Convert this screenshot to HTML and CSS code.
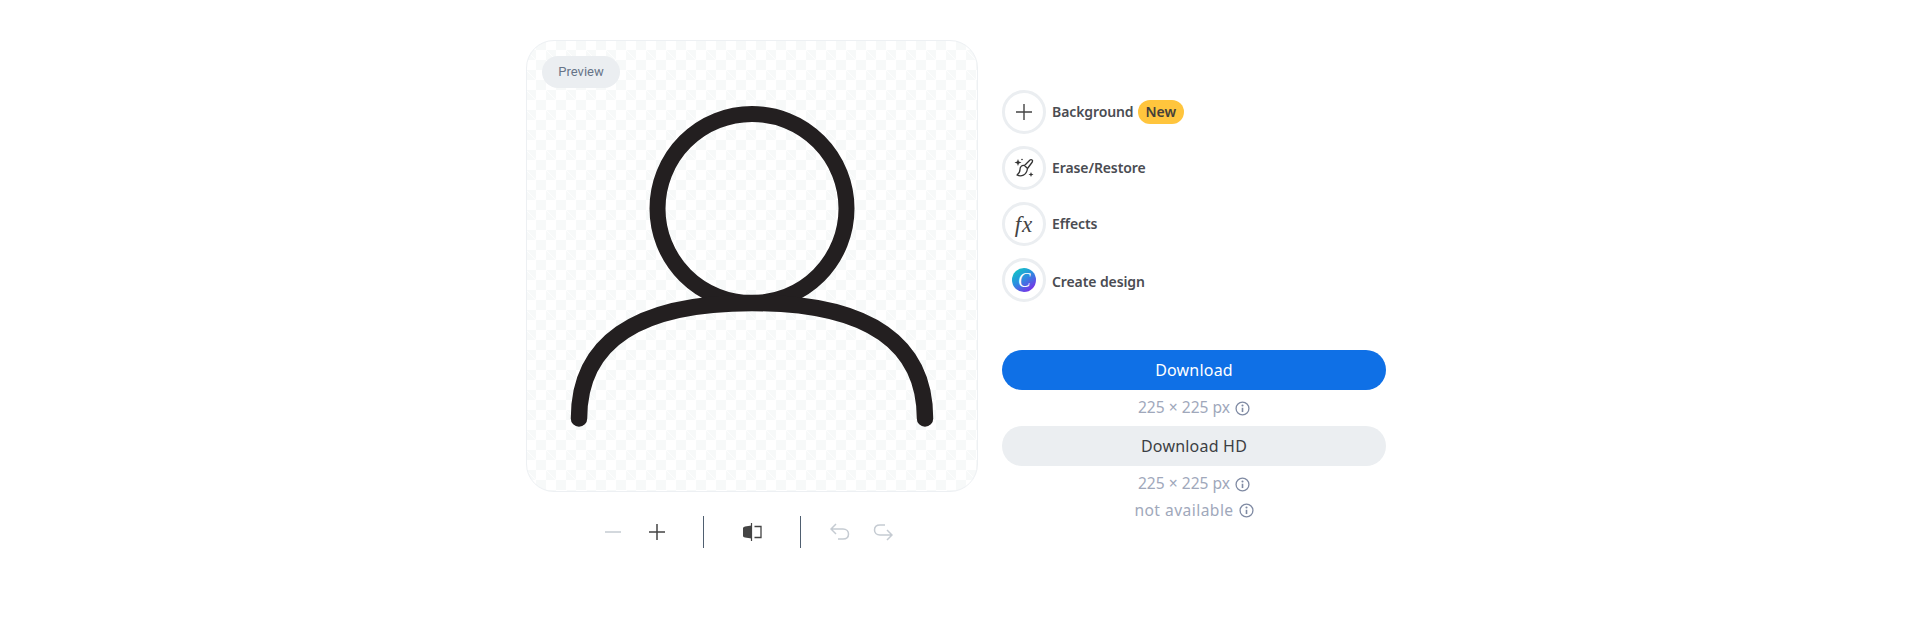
FILE: index.html
```html
<!DOCTYPE html>
<html lang="en">
<head>
<meta charset="utf-8">
<title>Preview</title>
<link rel="stylesheet" href="styles.css">
</head>
<body>
<main class="page">
  <section class="left">
    <div class="preview">
      <span class="badge">Preview</span>
      <svg class="person" viewBox="0 0 452 452" aria-hidden="true">
        <circle cx="226" cy="168.5" r="94.5" fill="none" stroke="#231f20" stroke-width="16"/>
        <path d="M53 378.500C53 306 106 263 226 263C346 263 399 306 399 378.500" fill="none" stroke="#231f20" stroke-width="16.500" stroke-linecap="round"/>
      </svg>
    </div>
    <div class="toolbar">
      <svg class="tool t-minus" viewBox="0 0 16 16"><path d="M0 8H16" class="off"/></svg>
      <svg class="tool t-plus" viewBox="0 0 16 16"><path d="M0 8H16M8 0V16" class="on"/></svg>
      <span class="divider d-one"></span>
      <svg class="tool t-compare" viewBox="0 0 20 20"><path d="M9.500 3.500L3 4.500Q1 5 1 6V14Q1 15 3 15.500L9.500 16.500Z" fill="#444"/><path d="M9.500 1V19" stroke="#444" stroke-width="1.2"/><path d="M12.500 4.500H19V15.500H12.500" fill="none" stroke="#444" stroke-width="1.3"/></svg>
      <span class="divider d-two"></span>
      <svg class="tool t-undo" viewBox="0 0 20 18"><path d="M6 1L1 6L6 11M1 6H13C16.5 6 18.5 8.500 18.500 11C18.500 14 16.500 16 13 16H8" class="off" fill="none"/></svg>
      <svg class="tool t-redo" viewBox="0 0 20 18"><path d="M14 7L19 12L14 17M19 12H7C3.500 12 1.500 9.500 1.500 7C1.500 4 3.500 2 7 2H12" class="off" fill="none"/></svg>
    </div>
  </section>
  <section class="right">
    <ul class="actions">
      <li class="action">
        <span class="circle"><svg class="ico" viewBox="0 0 18 18"><path d="M9 1V17M1 9H17" stroke="#444" stroke-width="1.4" fill="none"/></svg></span>
        <span class="label">Background</span><span class="new">New</span>
      </li>
      <li class="action">
        <span class="circle"><svg class="brush" viewBox="0 0 22 22"><path d="M17 3C18.500 2 20.300 3.500 19.300 5L14.500 11.500L11.500 8.500ZM11.500 8.500C8.500 8 7 10 7 12.500C7 15 6 16.500 4 18C8 20 13.500 18.500 14.500 11.500" fill="none" stroke="#333" stroke-width="1.3" stroke-linejoin="round"/><path d="M5 2L5.900 4.600L8.500 5.500L5.900 6.400L5 9L4.100 6.400L1.500 5.500L4.100 4.600Z" fill="#333"/><path d="M18 15L18.700 16.800L20.500 17.500L18.700 18.200L18 20L17.300 18.200L15.500 17.500L17.300 16.800Z" fill="#333"/><circle cx="9" cy="2.500" r=".8" fill="#333"/></svg></span>
        <span class="label">Erase/Restore</span>
      </li>
      <li class="action">
        <span class="circle"><span class="fx">fx</span></span>
        <span class="label">Effects</span>
      </li>
      <li class="action">
        <span class="circle"><span class="canva"><span class="canva-c">C</span></span></span>
        <span class="label label-low">Create design</span>
      </li>
    </ul>
    <div class="downloads">
      <button class="btn btn-primary">Download</button>
      <p class="note note-first"><span class="note-text">225 × 225 px</span><svg class="info" viewBox="0 0 14 14"><use href="#info"/></svg></p>
      <button class="btn btn-secondary">Download HD</button>
      <p class="note note-first"><span class="note-text">225 × 225 px</span><svg class="info" viewBox="0 0 14 14"><use href="#info"/></svg></p>
      <p class="note note-last"><span class="note-wide">not available</span><svg class="info" viewBox="0 0 14 14"><use href="#info"/></svg></p>
    </div>
  </section>
</main>
<svg class="defs" width="0" height="0" aria-hidden="true"><defs><g id="info"><circle cx="7" cy="7" r="6" fill="none" stroke="#7f8aa3" stroke-width="1.2"/><circle cx="7" cy="4.200" r="1" fill="#7f8aa3"/><path d="M7 6.300V10.300" stroke="#7f8aa3" stroke-width="1.500"/></g></defs></svg>
</body>
</html>
```
FILE: styles.css
```css
* { box-sizing: border-box; }
html, body { margin: 0; padding: 0; background: #fff; }
body { height: 626px; overflow: hidden; font-family: "Noto Sans", sans-serif; }
.page { display: flex; justify-content: center; gap: 24px; padding: 40px 0 0 1px; }
.left { width: 452px; }
.preview {
  position: relative;
  width: 452px;
  height: 452px;
  border: 1px solid #edf0f3;
  border-radius: 28px;
  overflow: hidden;
  background-color: #fff;
  background-image:
    linear-gradient(45deg, transparent 23.5%, rgba(255, 255, 255, .85) 24.5% 25.5%, transparent 26.5%),
    conic-gradient(#f7f9f9 25%, #fff 0 50%, #f7f9f9 0 75%, #fff 0);
  background-origin: border-box;
  background-size: 20px 20px;
}
.badge {
  position: absolute;
  left: 15px;
  top: 15px;
  width: 78px;
  height: 32px;
  border-radius: 16px;
  background: #ebeef1;
  color: #677488;
  font: 400 13px/32px Roboto, sans-serif;
  text-align: center;
}
.person { position: absolute; left: -1px; top: -1px; width: 452px; height: 452px; }
.toolbar { position: relative; height: 32px; margin-top: 24px; }
.tool, .divider { position: absolute; }
.on { stroke: #444; stroke-width: 1.5; }
.off { stroke: #c5cbd2; stroke-width: 1.5; }
.t-minus { left: 79px; top: 8px; width: 16px; height: 16px; }
.t-plus { left: 123px; top: 8px; width: 16px; height: 16px; }
.divider { top: 0; width: 1px; height: 32px; background: #4f5f70; }
.d-one { left: 177px; }
.d-two { left: 274px; }
.t-compare { left: 216px; top: 6px; width: 20px; height: 20px; }
.t-undo { left: 304px; top: 7px; width: 20px; height: 18px; }
.t-redo { left: 347px; top: 7px; width: 20px; height: 18px; }
.right { width: 384px; padding-top: 50px; }
.actions { list-style: none; margin: 0; padding: 0; display: flex; flex-direction: column; gap: 12px; }
.action { display: flex; align-items: center; height: 44px; }
.circle {
  display: flex;
  align-items: center;
  justify-content: center;
  width: 44px;
  height: 44px;
  margin-right: 6px;
  border: 3px solid #ebeef1;
  border-radius: 50%;
  flex: none;
}
.ico { width: 18px; height: 18px; }
.brush { width: 22px; height: 22px; }
.label { padding-bottom: 2px; font-size: 14px; font-weight: 600; letter-spacing: -.1px; color: #4a4c52; }
.label-low { padding: 2px 0 0; }
.new {
  margin-left: 4px;
  padding: 0 8px;
  height: 24px;
  border-radius: 12px;
  background: #ffc53d;
  color: #44403a;
  font-size: 14px;
  font-weight: 600;
  line-height: 24px;
}
.fx { font: italic 400 23px/1 "Liberation Serif", serif; letter-spacing: 1px; color: #444; }
.canva {
  display: flex;
  align-items: center;
  justify-content: center;
  width: 24px;
  height: 24px;
  border-radius: 50%;
  background: linear-gradient(145deg, #12c4c4 10%, #2a8fe0 45%, #7d2ae8 90%);
}
.canva-c { font: italic 400 22px/1 "Liberation Serif", serif; color: #fff; transform: scaleX(.85); }
.downloads { margin-top: 48px; }
.btn {
  display: block;
  width: 100%;
  height: 40px;
  border: 0;
  border-radius: 20px;
  font: 400 16px/40px "Noto Sans", sans-serif;
  letter-spacing: .2px;
  padding: 0;
}
.btn-primary { background: #0f70e6; color: #fff; }
.btn-secondary { background: #ebeef1; color: #3c3f44; }
.note {
  display: flex;
  align-items: center;
  justify-content: center;
  gap: 5px;
  margin: 0;
  color: #a0a8bb;
  font-size: 15.6px;
  line-height: 20px;
}
.note-text { padding-bottom: 2px; }
.note-wide { letter-spacing: .45px; }
.note-first { height: 36px; }
.note-last { height: 20px; margin-top: -2px; }
.info { width: 15px; height: 15px; }
.defs { position: absolute; }
```
